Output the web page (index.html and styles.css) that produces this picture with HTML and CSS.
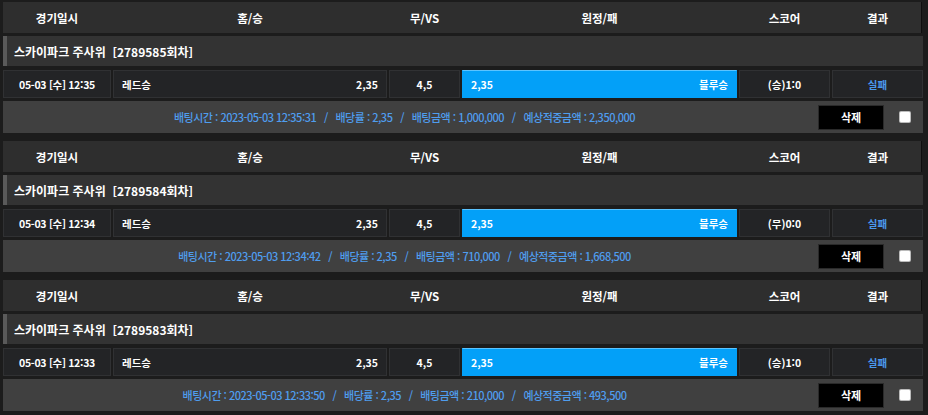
FILE: index.html
```html
<!DOCTYPE html>
<html lang="ko">
<head>
<meta charset="utf-8">
<link rel="stylesheet" href="styles.css">
</head>
<body>
<div class="list">

  <section class="bet">
    <div class="grid head">
      <div>경기일시</div><div>홈/승</div><div>무/VS</div><div>원정/패</div><div>스코어</div><div>결과</div>
    </div>
    <div class="title">스카이파크 주사위&nbsp;&nbsp;[2789585회차]</div>
    <div class="grid row">
      <div class="cell c date">05-03 [수] 12:35</div>
      <div class="cell sp"><span>레드승</span><span>2,35</span></div>
      <div class="cell c">4,5</div>
      <div class="cell sp sel"><span>2,35</span><span>블루승</span></div>
      <div class="cell c">(승)1:0</div>
      <div class="cell c lose">실패</div>
    </div>
    <div class="info">
      <div class="txt">배팅시간 : 2023-05-03 12:35:31&nbsp;&nbsp;&nbsp;/&nbsp;&nbsp;&nbsp;배당률 : 2,35&nbsp;&nbsp;&nbsp;/&nbsp;&nbsp;&nbsp;배팅금액 : 1,000,000&nbsp;&nbsp;&nbsp;/&nbsp;&nbsp;&nbsp;예상적중금액 : 2,350,000</div>
      <button class="del">삭제</button>
      <span class="chk"></span>
    </div>
  </section>

  <section class="bet">
    <div class="grid head">
      <div>경기일시</div><div>홈/승</div><div>무/VS</div><div>원정/패</div><div>스코어</div><div>결과</div>
    </div>
    <div class="title">스카이파크 주사위&nbsp;&nbsp;[2789584회차]</div>
    <div class="grid row">
      <div class="cell c date">05-03 [수] 12:34</div>
      <div class="cell sp"><span>레드승</span><span>2,35</span></div>
      <div class="cell c">4,5</div>
      <div class="cell sp sel"><span>2,35</span><span>블루승</span></div>
      <div class="cell c">(무)0:0</div>
      <div class="cell c lose">실패</div>
    </div>
    <div class="info">
      <div class="txt">배팅시간 : 2023-05-03 12:34:42&nbsp;&nbsp;&nbsp;/&nbsp;&nbsp;&nbsp;배당률 : 2,35&nbsp;&nbsp;&nbsp;/&nbsp;&nbsp;&nbsp;배팅금액 : 710,000&nbsp;&nbsp;&nbsp;/&nbsp;&nbsp;&nbsp;예상적중금액 : 1,668,500</div>
      <button class="del">삭제</button>
      <span class="chk"></span>
    </div>
  </section>

  <section class="bet">
    <div class="grid head">
      <div>경기일시</div><div>홈/승</div><div>무/VS</div><div>원정/패</div><div>스코어</div><div>결과</div>
    </div>
    <div class="title">스카이파크 주사위&nbsp;&nbsp;[2789583회차]</div>
    <div class="grid row">
      <div class="cell c date">05-03 [수] 12:33</div>
      <div class="cell sp"><span>레드승</span><span>2,35</span></div>
      <div class="cell c">4,5</div>
      <div class="cell sp sel"><span>2,35</span><span>블루승</span></div>
      <div class="cell c">(승)1:0</div>
      <div class="cell c lose">실패</div>
    </div>
    <div class="info">
      <div class="txt">배팅시간 : 2023-05-03 12:33:50&nbsp;&nbsp;&nbsp;/&nbsp;&nbsp;&nbsp;배당률 : 2,35&nbsp;&nbsp;&nbsp;/&nbsp;&nbsp;&nbsp;배팅금액 : 210,000&nbsp;&nbsp;&nbsp;/&nbsp;&nbsp;&nbsp;예상적중금액 : 493,500</div>
      <button class="del">삭제</button>
      <span class="chk"></span>
    </div>
  </section>

</div>
</body>
</html>
```

FILE: styles.css
```css
* { box-sizing: border-box; }
html, body {
  margin: 0;
  padding: 0;
  background: #1c1c1c;
}
body {
  font-family: "Noto Sans CJK KR", "Noto Sans", sans-serif;
  color: #fff;
  overflow: hidden;
}
.list {
  padding: 2px 5px 0 3px;
  display: flex;
  flex-direction: column;
  gap: 8px;
}
.bet {
  display: flex;
  flex-direction: column;
}
.grid {
  display: grid;
  grid-template-columns: 108px 274px 71px 275px 91px 91px;
  column-gap: 2px;
}
.head {
  height: 31px;
  background: #2e2e2e;
  border-right: 1px solid #0e0e0e;
  align-items: center;
  font-size: 11.5px;
  font-weight: 700;
  text-align: center;
  margin-right: 1px;
}
.title {
  margin-top: 3px;
  height: 30px;
  background: #333333;
  border-left: 4px solid #5a5a5a;
  padding-left: 7px;
  display: flex;
  align-items: center;
  font-size: 12px;
  font-weight: 700;
}
.row {
  margin-top: 4px;
  height: 28px;
}
.cell {
  background: #232426;
  border: 1px solid #303133;
  display: flex;
  align-items: center;
  font-size: 10.5px;
  font-weight: 700;
  padding: 0 8px;
}
.cell.date { letter-spacing: -0.3px; }
.cell.c { justify-content: center; }
.cell.sp { justify-content: space-between; }
.cell.sel {
  background: #03a0f8;
  border-color: #03a0f8;
  border-top-color: #5cc4ff;
}
.cell.lose { color: #4a98ec; }
.info {
  margin-top: 3px;
  height: 32px;
  background: #404040;
  display: flex;
  align-items: center;
}
.txt {
  flex: 1;
  text-align: center;
  font-size: 11px;
  font-weight: 500;
  letter-spacing: -0.5px;
  color: #4f9dee;
  white-space: nowrap;
  padding-right: 12px;
}
.del {
  width: 66px;
  height: 25px;
  background: #000;
  border: 1px solid #2a2a2a;
  color: #fff;
  font-family: inherit;
  font-size: 11px;
  font-weight: 700;
  padding: 0;
  margin-right: 16px;
}
.chk {
  width: 10px;
  height: 10px;
  background: #fff;
  border-radius: 1px;
  box-shadow: 0 0 0 1px #bbb;
  margin-right: 13px;
}
```
